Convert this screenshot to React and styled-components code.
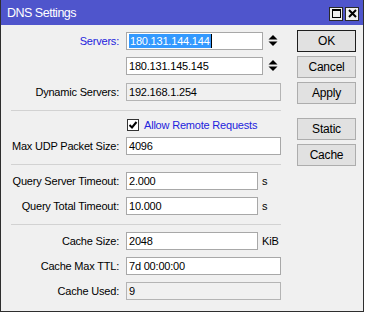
import React from 'react'
import styled, { createGlobalStyle } from 'styled-components'

const GlobalStyle = createGlobalStyle`
  * { box-sizing: border-box; }
  body {
    margin: 0;
    background: #ffffff;
    font-family: "Liberation Sans", Arial, sans-serif;
    font-size: 11px;
    letter-spacing: -0.2px;
    color: #000;
  }
`

const SpinIcon = () => (
  <svg width="10" height="12" viewBox="0 0 10 12">
    <polygon points="5,0 9.5,4.5 0.5,4.5" fill="#000" />
    <polygon points="0.5,6.5 9.5,6.5 5,11" fill="#000" />
  </svg>
)

const App = () => {
  return (
    <>
      <GlobalStyle />
      <Window>
        <TitleBar>
          <Title>DNS Settings</Title>
          <TitleButtons>
            <TitleButton>
              <svg width="9" height="9" viewBox="0 0 9 9">
                <rect x="0.5" y="0.5" width="8" height="8" fill="none" stroke="#000" strokeWidth="1" />
                <line x1="0" y1="1.5" x2="9" y2="1.5" stroke="#000" strokeWidth="1" />
              </svg>
            </TitleButton>
            <TitleButton>
              <svg width="9" height="9" viewBox="0 0 9 9">
                <path d="M1 1 L8 8 M8 1 L1 8" stroke="#000" strokeWidth="2" />
              </svg>
            </TitleButton>
          </TitleButtons>
        </TitleBar>
        <Body>
          <Form>
            <Row>
              <Label $blue>Servers:</Label>
              <Field $w={137}>
                <Selected>180.131.144.144</Selected>
                <Caret />
              </Field>
              <Spin><SpinIcon /></Spin>
            </Row>
            <Row $mt={7}>
              <Label />
              <Field $w={137}>180.131.145.145</Field>
              <Spin><SpinIcon /></Spin>
            </Row>
            <Row $mt={8}>
              <Label>Dynamic Servers:</Label>
              <Field $w={155} $disabled>192.168.1.254</Field>
            </Row>
            <Separator $mt={9} />
            <CheckRow>
              <Box>
                <svg width="10" height="10" viewBox="0 0 10 10">
                  <path d="M1.5 5 L4 7.5 L8.5 2" fill="none" stroke="#000" strokeWidth="2" />
                </svg>
              </Box>
              <CheckText>Allow Remote Requests</CheckText>
            </CheckRow>
            <Row $mt={6}>
              <Label>Max UDP Packet Size:</Label>
              <Field $w={155}>4096</Field>
            </Row>
            <Separator $mt={9} />
            <Row $mt={7}>
              <Label>Query Server Timeout:</Label>
              <Field $w={132}>2.000</Field>
              <Unit>s</Unit>
            </Row>
            <Row $mt={7}>
              <Label>Query Total Timeout:</Label>
              <Field $w={132}>10.000</Field>
              <Unit>s</Unit>
            </Row>
            <Separator $mt={9} />
            <Row $mt={7}>
              <Label>Cache Size:</Label>
              <Field $w={132}>2048</Field>
              <Unit>KiB</Unit>
            </Row>
            <Row $mt={7}>
              <Label>Cache Max TTL:</Label>
              <Field $w={155}>7d 00:00:00</Field>
            </Row>
            <Row $mt={7}>
              <Label>Cache Used:</Label>
              <Field $w={155} $disabled>9</Field>
            </Row>
          </Form>
          <Buttons>
            <Button $default>OK</Button>
            <Button>Cancel</Button>
            <Button>Apply</Button>
            <Button $mt={10}>Static</Button>
            <Button>Cache</Button>
          </Buttons>
        </Body>
      </Window>
    </>
  )
}

export default App

const Window = styled.div`
  width: 364px;
  height: 312px;
  border: 1px solid #2e2e2e;
  border-top: none;
  background: #f0f0f0;
  display: flex;
  flex-direction: column;
`
const TitleBar = styled.div`
  height: 25px;
  background: #4f55cc;
  display: flex;
  align-items: center;
  padding-left: 6px;
  padding-right: 4px;
`
const Title = styled.div`
  flex: 1;
  color: #fff;
  font-size: 12.5px;
  letter-spacing: -0.5px;
  margin-top: 1px;
`
const TitleButtons = styled.div`
  display: flex;
  gap: 2px;
  margin-top: 2px;
`
const TitleButton = styled.div`
  width: 14px;
  height: 14px;
  background: #f0f0f0;
  border: 1px solid #2a2a2a;
  display: flex;
  align-items: center;
  justify-content: center;
`
const Body = styled.div`
  display: flex;
  flex: 1;
`
const Form = styled.div`
  width: 280px;
  padding-top: 7px;
  display: flex;
  flex-direction: column;
`
const Row = styled.div`
  display: flex;
  align-items: center;
  height: 18px;
  margin-top: ${p => p.$mt || 0}px;
`
const Label = styled.div`
  width: 118px;
  margin-right: 7px;
  text-align: right;
  color: ${p => (p.$blue ? '#2323dd' : '#000')};
`
const Field = styled.div`
  width: ${p => p.$w}px;
  height: 18px;
  border: 1px solid ${p => (p.$disabled ? '#b4b4b4' : '#a8a8a8')};
  background: ${p => (p.$disabled ? '#f0f0f0' : '#fff')};
  padding: 0 2px;
  display: flex;
  align-items: center;
  white-space: nowrap;
  overflow: hidden;
`
const Selected = styled.span`
  background: #3399ff;
  color: #fff;
  line-height: 14px;
  padding: 0 1px;
`
const Caret = styled.span`
  width: 1px;
  height: 14px;
  background: #000;
`
const Spin = styled.div`
  margin-left: 5px;
  display: flex;
  align-items: center;
`
const Unit = styled.div`
  margin-left: 4px;
`
const Separator = styled.div`
  height: 1px;
  margin-left: 10px;
  background: #d2d2d2;
  margin-top: ${p => p.$mt || 0}px;
`
const CheckRow = styled.div`
  display: flex;
  align-items: center;
  height: 13px;
  margin-top: 7px;
  padding-left: 126px;
`
const Box = styled.div`
  width: 12px;
  height: 12px;
  border: 1px solid #333;
  background: #fff;
  display: flex;
  align-items: center;
  justify-content: center;
`
const CheckText = styled.div`
  margin-left: 5px;
  color: #2323dd;
`
const Buttons = styled.div`
  margin-left: 16px;
  padding-top: 5px;
  display: flex;
  flex-direction: column;
  gap: 4px;
`
const Button = styled.div`
  width: 59px;
  height: 22px;
  margin-top: ${p => p.$mt || 0}px;
  background: #e1e1e1;
  border: 1px solid ${p => (p.$default ? '#1e1e1e' : '#adadad')};
  display: flex;
  align-items: center;
  justify-content: center;
  font-size: 12px;
`
